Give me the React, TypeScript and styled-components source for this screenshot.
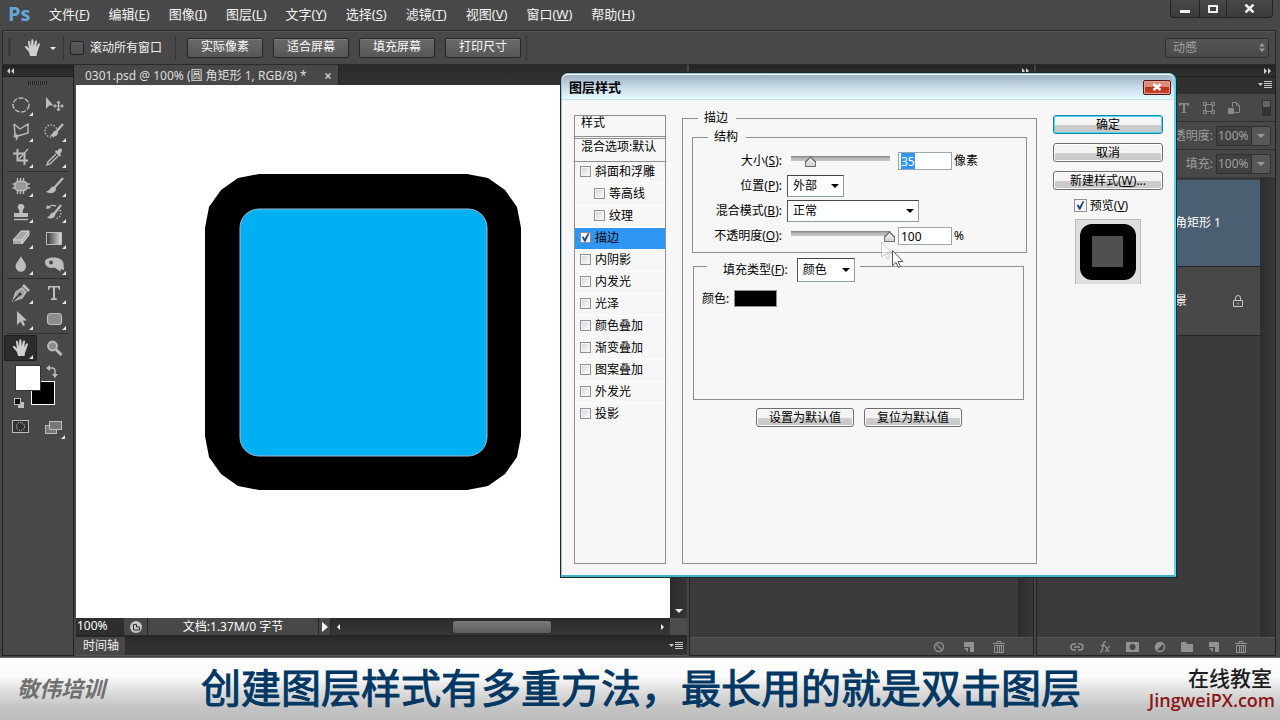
import React, { useEffect, useRef } from 'react';
import styled, { createGlobalStyle, css } from 'styled-components';

const Global = createGlobalStyle`
  * { box-sizing: border-box; }
  body { margin: 0; background: #464646; }
  body, button, input, select, textarea {
    font-family: "Noto Sans", "Noto Sans CJK SC", sans-serif;
    font-size: 12px;
    line-height: 16px;
  }
  button, select, input { margin: 0; }
  button:focus, select:focus, input:focus { outline: none; }
  svg { display: block; flex: none; }
`;

const Shell = styled.div`
  position: relative;
  display: flex;
  flex-direction: column;
  min-height: 100vh;
  overflow: hidden;
  background: #464646;
  color: #f0f0f0;
`;

/* ---------- menu bar ---------- */
const MenuBar = styled.header`
  display: flex;
  align-items: center;
  height: 30px;
  padding: 0 0 2px 8px;
  background: #484848;
`;
const Logo = styled.div`
  width: 41px;
  font-family: "Open Sans", sans-serif;
  font-size: 20px;
  font-weight: 700;
  line-height: 26px;
  color: #66a7dc;
`;
const Menus = styled.nav`
  display: flex;
  flex: 1;
  gap: 19px;
`;
const MenuItem = styled.button`
  padding: 0;
  border: 0;
  background: none;
  color: #f4f4f4;
  font-size: 13px;
  line-height: 18px;
  white-space: nowrap;
`;
const WindowButtons = styled.div`
  display: flex;
  align-self: flex-start;
  height: 18px;
  margin-right: 7px;
  border: 1px solid #222;
  border-top: 0;
  border-radius: 0 0 4px 4px;
  background: linear-gradient(#474747, #3c3c3c);
`;
const WindowButton = styled.button<{ $w: number }>`
  display: flex;
  align-items: center;
  justify-content: center;
  width: ${(p) => p.$w}px;
  padding: 0;
  border: 0;
  background: none;
  & + & { border-left: 1px solid #222; }
`;

/* ---------- options bar ---------- */
const OptionsBar = styled.div`
  display: flex;
  align-items: center;
  height: 35px;
  margin: 0 4px 0 2px;
  padding: 0 6px 0 5px;
  border: 1px solid #2a2a2a;
  box-shadow: inset 0 1px 0 #555;
  background: #484848;
`;
const Divider = styled.span`
  width: 1px;
  height: 24px;
  margin: 0 6px 0 5px;
  background: #333;
`;
const DarkCheck = styled.input`
  appearance: none;
  width: 14px;
  height: 14px;
  border: 1px solid #222;
  border-radius: 2px;
  background: linear-gradient(#5c5c5c, #4e4e4e);
`;
const CheckLabel = styled.label`
  display: flex;
  align-items: center;
  gap: 6px;
  width: 100px;
  white-space: nowrap;
`;
const OptionButtons = styled.div`
  display: flex;
  gap: 10px;
  padding-left: 5px;
`;
const OptionButton = styled.button`
  width: 76px;
  height: 20px;
  padding: 0 0 1px;
  border: 1px solid #262626;
  border-radius: 2px;
  background: linear-gradient(#6a6a6a, #565656);
  box-shadow: inset 0 1px 0 #7c7c7c;
  color: #fafafa;
`;
const WorkspaceBox = styled.div`
  display: grid;
  align-items: center;
  width: 104px;
  height: 20px;
  margin-left: auto;
  > * { grid-area: 1 / 1; }
  > svg { justify-self: end; margin-right: 4px; pointer-events: none; }
`;
const WorkspaceSelect = styled.select`
  appearance: none;
  width: 100%;
  height: 20px;
  padding: 0 7px;
  border: 1px solid #303030;
  border-radius: 3px;
  background: linear-gradient(#545454, #4a4a4a);
  color: #a2a2a2;
`;

/* ---------- work area ---------- */
const WorkArea = styled.main`
  display: flex;
  flex: 1;
  gap: 2px;
  padding: 0 4px 1px 2px;
  border-bottom: 1px solid #6a6a6a;
`;
const Strip = styled.div<{ $end?: boolean }>`
  display: flex;
  align-items: center;
  justify-content: ${(p) => (p.$end ? 'flex-end' : 'flex-start')};
  height: 12px;
  padding: 0 3px 0 4px;
  background: linear-gradient(#232323, #313131);
  border-bottom: 1px solid #1f1f1f;
`;
const ToolPanel = styled.aside`
  display: flex;
  flex-direction: column;
  width: 72px;
  border: 1px solid #222;
  border-top: 0;
  background: #484848;
`;
const Grip = styled.div`
  width: 19px;
  height: 4px;
  margin: 4px auto 7px 25px;
  background: repeating-linear-gradient(90deg, #222 0 1px, #555 1px 2px);
`;
const ToolGroup = styled.div`
  display: grid;
  grid-template-columns: 33px 33px;
  padding-left: 1px;
`;
const ToolButton = styled.button<{ $on?: boolean }>`
  display: flex;
  align-items: center;
  justify-content: center;
  height: 26px;
  padding: 0;
  border: 0;
  border-radius: 2px;
  background: none;
  ${(p) => p.$on && css`
    background: #2c2c2c;
    box-shadow: inset 0 0 0 1px #202020;
  `}
`;
const ToolRule = styled.hr`
  width: 62px;
  height: 1px;
  margin: 1px auto;
  border: 0;
  background: #2e2e2e;
`;

const Document = styled.section`
  display: flex;
  flex: 1;
  flex-direction: column;
  min-width: 0;
  background: #262626;
`;
const TabBar = styled.div`
  display: flex;
  height: 20px;
  background: linear-gradient(#2a2a2a, #313131);
`;
const DocTab = styled.div`
  display: flex;
  align-items: center;
  justify-content: space-between;
  width: 263px;
  padding: 2px 7px 0 9px;
  border-right: 1px solid #222;
  background: #484848;
  color: #dedede;
  white-space: nowrap;
`;
const TabClose = styled.button`
  padding: 0;
  border: 0;
  background: none;
`;
const CanvasRow = styled.div`
  display: flex;
  flex: 1;
`;
const Canvas = styled.div`
  flex: 1;
  min-width: 0;
  padding: 89px 129px;
  background: #fff;
`;
const VScroll = styled.div`
  display: flex;
  align-items: flex-end;
  justify-content: center;
  width: 17px;
  padding-bottom: 5px;
  background: linear-gradient(90deg, #2a2a2a, #363636);
`;
const StatusBar = styled.div`
  display: flex;
  height: 17px;
  background: #333;
`;
const ZoomText = styled.div`
  width: 48px;
  padding-left: 1px;
  background: #2e2e2e;
  color: #fff;
`;
const StatusCell = styled.div<{ $w: number }>`
  display: flex;
  align-items: center;
  justify-content: center;
  width: ${(p) => p.$w}px;
  border-right: 1px solid #262626;
  background: #484848;
  color: #fff;
`;
const HScroll = styled.div`
  display: flex;
  flex: 1;
  align-items: center;
  justify-content: space-between;
  padding: 0 5px;
  background: linear-gradient(#2b2b2b, #363636);
`;
const HThumb = styled.div`
  width: 98px;
  height: 12px;
  margin-right: auto;
  margin-left: 113px;
  border-radius: 3px;
  background: linear-gradient(#787878, #5e5e5e);
`;
const ScrollCorner = styled.div`
  width: 17px;
  background: #4c4c4c;
`;
const Timeline = styled.div`
  display: flex;
  align-items: center;
  justify-content: space-between;
  height: 19px;
  margin-top: 2px;
  padding-right: 4px;
  border-bottom: 1px solid #555;
  background: linear-gradient(#2a2a2a, #343434);
`;
const TimelineTab = styled.div`
  align-self: stretch;
  width: 49px;
  padding-left: 7px;
  line-height: 18px;
  background: #484848;
`;

/* ---------- right panels ---------- */
const SidePanel = styled.aside<{ $w: number }>`
  display: flex;
  flex-direction: column;
  width: ${(p) => p.$w}px;
  border: 1px solid #222;
  border-top: 0;
  background: #3b3b3b;
`;
const PanelBody = styled.div`
  display: flex;
  flex: 1;
  justify-content: flex-end;
`;
const Gutter = styled.div`
  width: 15px;
  background: linear-gradient(90deg, #2d2d2d, #383838);
`;
const PanelFooter = styled.div<{ $gap: number; $end: number }>`
  display: flex;
  align-items: center;
  justify-content: flex-end;
  gap: ${(p) => p.$gap}px;
  height: 18px;
  padding-right: ${(p) => p.$end}px;
  border-top: 1px solid #555;
  background: #484848;
`;
const PanelTabs = styled.div`
  display: flex;
  align-items: center;
  justify-content: flex-end;
  height: 16px;
  padding-right: 3px;
  background: #303030;
`;
const PanelRow = styled.div`
  display: flex;
  align-items: center;
  justify-content: flex-end;
  height: 28px;
  padding-right: 4px;
  border-top: 1px solid #303030;
  background: #484848;
  color: #9c9c9c;
`;
const FilterIcons = styled.div`
  display: flex;
  align-items: center;
  gap: 13px;
`;
const ValueBox = styled.input`
  width: 35px;
  height: 20px;
  margin-left: 3px;
  padding: 0 1px;
  border: 1px solid #303030;
  border-right: 0;
  background: #404040;
  color: #a2a2a2;
`;
const ValueArrow = styled.button`
  display: flex;
  align-items: center;
  justify-content: center;
  width: 20px;
  height: 20px;
  padding: 0;
  border: 1px solid #303030;
  border-radius: 0 2px 2px 0;
  background: #575757;
`;
const LayerList = styled.div`
  flex: 1;
  padding-top: 3px;
`;
const Layer = styled.div<{ $h: number; $active?: boolean }>`
  display: flex;
  align-items: center;
  justify-content: space-between;
  height: ${(p) => p.$h}px;
  padding: 0 16px 0 126px;
  border-bottom: 1px solid #262626;
  background: ${(p) => (p.$active ? '#4b5f72' : '#484848')};
  color: #fff;
`;

/* ---------- dialog ---------- */
const Dialog = styled.section`
  position: absolute;
  top: 73px;
  left: 561px;
  display: flex;
  flex-direction: column;
  width: 615px;
  height: 504px;
  border: 1px solid #9fc3ce;
  border-right: 2px solid #55dcf2;
  border-bottom: 2px solid #3fb4c6;
  border-radius: 7px 7px 0 0;
  box-shadow: 0 0 0 1px #1d2a2e;
  background: #f7f7f7;
  color: #000;
`;
const TitleBar = styled.div`
  display: flex;
  align-items: center;
  justify-content: space-between;
  height: 26px;
  padding: 0 3px 0 7px;
  border-top: 1px solid #fff;
  border-bottom: 1px solid #c6dde6;
  border-radius: 6px 6px 0 0;
  background: linear-gradient(#9fb2c4, #c8dae8 50%, #e6fbff);
`;
const DialogTitle = styled.h1`
  margin: 0;
  font-size: 13px;
  line-height: 20px;
  font-weight: 700;
`;
const CloseButton = styled.button`
  display: flex;
  align-items: center;
  justify-content: center;
  width: 28px;
  height: 15px;
  padding: 0;
  border: 1px solid #4d1a1a;
  border-radius: 2px;
  box-shadow: inset 0 0 0 1px #e8a090;
  background: linear-gradient(#e08a78 45%, #b8301c 50%, #c8492f);
`;
const DialogBody = styled.div`
  display: flex;
  flex: 1;
  align-items: flex-start;
  padding: 10px 11px 11px 12px;
`;
const StyleList = styled.div`
  align-self: stretch;
  width: 92px;
  margin: 5px 0 0;
  border: 1px solid #8f8f8f;
`;
const ListHead = styled.div<{ $double?: boolean }>`
  height: 23px;
  padding: 0 6px;
  border-bottom: ${(p) => (p.$double ? '3px double' : '1px solid')} #8f8f8f;
  line-height: ${(p) => (p.$double ? 14 : 16)}px;
  white-space: nowrap;
`;
const StyleRow = styled.label<{ $indent?: boolean; $on?: boolean }>`
  display: flex;
  align-items: center;
  gap: 4px;
  height: 22px;
  padding: 0 0 2px ${(p) => (p.$indent ? 19 : 5)}px;
  border-bottom: 1px solid #fff;
  background: ${(p) => (p.$on ? '#2f96f3' : 'transparent')};
`;
const Check = styled.input<{ $s: number }>`
  appearance: none;
  display: grid;
  flex: none;
  place-items: center;
  width: ${(p) => p.$s}px;
  height: ${(p) => p.$s}px;
  border: 1px solid #8b9299;
  background: linear-gradient(135deg, #cfd3d8, #fff);
  box-shadow: inset 0 0 0 1px #f6f6f6;
  &:checked { background: #f4f6fb; }
  &:checked::after {
    content: "";
    width: 9px;
    height: 9px;
    background: #26448f;
    clip-path: polygon(10% 45%, 28% 40%, 42% 62%, 78% 4%, 96% 4%, 50% 96%, 36% 96%);
  }
`;
const Group = styled.fieldset`
  min-width: 0;
  margin: 0;
  padding: 0;
  border: 1px solid #8f8f8f;
`;
const MainGroup = styled(Group)`
  flex: 1;
  align-self: stretch;
  margin-left: 16px;
`;
const StructureGroup = styled(Group)`
  height: 124px;
  margin: 3px 9px 5px;
`;
const FillGroup = styled(Group)`
  height: 142px;
  margin: 0 12px 0 10px;
`;
const Legend = styled.legend`
  margin-left: 15px;
  padding: 0 8px 0 6px;
  line-height: 16px;
`;
const FillLegend = styled.legend`
  display: flex;
  align-items: flex-start;
  height: 16px;
  margin-left: 13px;
  padding: 0 5px 0 16px;
  > label { padding-top: 4px; margin-right: 9px; }
`;
const Fields = styled.div`
  display: flex;
  flex-direction: column;
  gap: 3px;
  padding-top: 5px;
`;
const Field = styled.div`
  display: flex;
  align-items: center;
  height: 22px;
`;
const FieldLabel = styled.label<{ $wide?: boolean }>`
  width: ${(p) => (p.$wide ? 94 : 92)}px;
  padding-right: ${(p) => (p.$wide ? 5 : 3)}px;
  text-align: right;
  white-space: nowrap;
`;
const SelectBox = styled.div<{ $w: number; $h: number }>`
  display: grid;
  align-items: center;
  width: ${(p) => p.$w}px;
  height: ${(p) => p.$h}px;
  > * { grid-area: 1 / 1; }
  > svg { justify-self: end; margin-right: 5px; pointer-events: none; }
`;
const Select = styled.select`
  appearance: none;
  width: 100%;
  height: 100%;
  padding: 0 5px;
  border: 1px solid #8ca0a0;
  border-top-color: #444;
  border-left-color: #555;
  background: #fff;
  color: #000;
`;
const Slider = styled.input`
  appearance: none;
  width: 110px;
  height: 14px;
  margin: 0 3px 0 0;
  background: linear-gradient(#7d7d7d, #b4b4b4 40%, #c8c8c8) center 2px / 99px 5px no-repeat;
  &::-webkit-slider-thumb {
    appearance: none;
    width: 11px;
    height: 11px;
    margin-top: 1px;
    background:
      linear-gradient(135deg, #6f6f6f 0 5px, transparent 5px),
      linear-gradient(225deg, #6f6f6f 0 5px, transparent 5px),
      linear-gradient(#f6f6f6, #cfcfcf);
    box-shadow: inset 0 0 0 1px #6f6f6f;
    clip-path: polygon(50% 0, 100% 50%, 100% 100%, 0 100%, 0 50%);
  }
`;
const NumberBox = styled.input`
  width: 54px;
  height: 18px;
  margin-right: 2px;
  padding: 0 2px;
  border: 1px solid #9aa8ae;
  background: #fff;
  color: #000;
  &::selection { background: #2f96f3; color: #fff; }
`;
const ColorRow = styled.div`
  display: flex;
  align-items: center;
  gap: 5px;
  padding: 16px 0 0 8px;
`;
const Swatch = styled.button`
  width: 43px;
  height: 17px;
  padding: 0;
  border: 1px solid #8f8f8f;
  background: #000;
`;
const DefaultButtons = styled.div`
  display: flex;
  gap: 10px;
  padding: 8px 0 0 73px;
`;
const XpButton = styled.button<{ $w: number; $primary?: boolean }>`
  width: ${(p) => p.$w}px;
  height: 19px;
  padding: 0;
  border: 1px solid ${(p) => (p.$primary ? '#1587a6' : '#6e6e6e')};
  border-radius: 3px;
  box-shadow: inset 0 0 0 1px ${(p) => (p.$primary ? '#4fd8f4' : '#fdfdfd')};
  background: linear-gradient(#f4f4f4 50%, #cdcdcd 52%, #c8c8c8);
  color: #000;
  line-height: 16px;
`;
const Actions = styled.div`
  display: flex;
  flex-direction: column;
  align-items: center;
  gap: 9px;
  width: 110px;
  margin: 5px 0 0 16px;
`;
const PreviewLabel = styled.label`
  display: flex;
  align-items: center;
  gap: 3px;
  height: 13px;
  margin-right: 14px;
`;
const Thumb = styled.div`
  display: grid;
  place-items: center;
  width: 66px;
  height: 65px;
  margin-top: -2px;
  border: 1px solid #bbb;
  border-bottom: 0;
  background: #dedede;
`;
const Pointer = styled.svg`
  position: absolute;
  top: 241px;
  left: 880px;
  pointer-events: none;
`;

/* ---------- caption band ---------- */
const Band = styled.footer`
  display: flex;
  align-items: center;
  justify-content: space-between;
  height: 62px;
  padding: 0 5px 0 17px;
  background: linear-gradient(#fff 0, #fafafa 30%, #dcdcdc 55%, #c4c4c4 80%, #bcbcbc);
`;
const School = styled.div`
  width: 120px;
  padding-bottom: 2px;
  font-size: 22px;
  font-style: italic;
  font-weight: 700;
  line-height: 28px;
  color: #707070;
`;
const Caption = styled.p`
  margin: 0;
  padding-bottom: 2px;
  font-size: 40px;
  line-height: 60px;
  color: #003763;
  -webkit-text-stroke: 1px #003763;
  white-space: nowrap;
`;
const Brand = styled.div`
  display: flex;
  flex-direction: column;
  align-items: flex-end;
  width: 130px;
`;
const BrandName = styled.span`
  margin-right: 3px;
  font-family: "Noto Sans CJK SC", sans-serif;
  font-size: 21px;
  font-weight: 500;
  line-height: 23px;
  color: #1c1c1c;
`;
const BrandLink = styled.a`
  color: #8c1414;
  font-family: "Open Sans", sans-serif;
  font-size: 18px;
  font-weight: 600;
  line-height: 23px;
  text-decoration: none;
`;

/* ---------- icons ---------- */
const G = '#bdbdbd';

const Tool = ({ children, plain }: { children: React.ReactNode; plain?: boolean }) => (
  <svg width="26" height="26" viewBox="0 0 26 26" fill="none" stroke={G} strokeWidth="1.4">
    {children}
    {!plain && <path d="M25 20v4h-4z" fill="#e6e6e6" stroke="none" />}
  </svg>
);

const HandShape = () => (
  <path
    d="M10 21 9 17 5 12.500c-.8-1.200.8-2.200 1.800-1.200L9 13.500 8 7.200c-.2-1.600 1.700-1.900 2-.4l1 4.800.3-6.300c.1-1.500 2-1.500 2.100 0l.3 6.200 1.300-5.200c.4-1.500 2.200-1 2 .4l-.8 5.600 1.900-3.500c.8-1.300 2.300-.5 1.800.8L17 18l-.5 3z"
    fill="#cfcfcf"
    stroke="none"
  />
);

const toolGroups: { name: string; icon: React.ReactNode; on?: boolean }[][] = [
  [
    { name: '椭圆选框工具', icon: <Tool><ellipse cx="13" cy="13" rx="8" ry="7" strokeDasharray="5 1.500" /></Tool> },
    {
      name: '移动工具',
      icon: (
        <Tool plain>
          <path d="M5 5v12l3-3.500h4.500z" fill={G} stroke="none" />
          <path d="M17.500 9.500v9M13 14h9M16 11l1.500-1.500L19 11M16 17l1.500 1.500L19 17M14.500 12.500 13 14l1.500 1.500M20.500 12.500 22 14l-1.500 1.500" strokeWidth="1.200" />
        </Tool>
      ),
    },
    { name: '多边形套索工具', icon: <Tool><path d="m6 6 6 5 8-5v9l-10 3-3-1.500 1-1M6 6l1 10M7 17c-1.500 1-1 2 1 2l2-1-2 4" /></Tool> },
    {
      name: '快速选择工具',
      icon: (
        <Tool>
          <circle cx="10" cy="13" r="6" strokeDasharray="1.500 1.500" />
          <path d="m22 6-7 8" strokeWidth="2.200" />
          <path d="M15 12.500c-3 0-3 4-6 5 3 2 8 1 8-3z" fill={G} stroke="none" />
        </Tool>
      ),
    },
    { name: '裁剪工具', icon: <Tool><path d="M9.500 5v11.500H20M5 9.500h11.500V21" strokeWidth="2" /><path d="m11 15 9-10" strokeWidth="1.200" /></Tool> },
    {
      name: '吸管工具',
      icon: (
        <Tool>
          <path d="m15 10-8 8-1 3 3-1 8-8" />
          <path d="m14 8 5 5 1-2-1-1 2-3c.5-2-1-3-3-2l-2 2-1-1z" fill={G} stroke="none" />
        </Tool>
      ),
    },
  ],
  [
    {
      name: '污点修复画笔',
      icon: (
        <Tool>
          <rect x="7" y="8.500" width="12" height="9" rx="3.500" fill="#999" />
          <path d="M9.500 5v3M12.500 5v3M15.500 5v3M9.500 18v3M12.500 18v3M15.500 18v3M4.500 11h3M4.500 15h3M19 11h3M19 15h3" />
        </Tool>
      ),
    },
    {
      name: '画笔工具',
      icon: (
        <Tool>
          <path d="m22 5-8.500 9.500" strokeWidth="2.200" />
          <path d="M13 13.500c-4-.5-3 4-8 5 3 3 10 2 10-3z" fill={G} stroke="none" />
        </Tool>
      ),
    },
    {
      name: '仿制图章工具',
      icon: (
        <Tool>
          <path d="M13 5a3 3 0 0 1 2 5.500L14.500 14H20v4H6v-4h5.500L11 10.500A3 3 0 0 1 13 5z" fill={G} stroke="none" />
          <path d="M6 20.500h14" />
        </Tool>
      ),
    },
    {
      name: '历史记录画笔',
      icon: (
        <Tool>
          <path d="m20 6-7 9" strokeWidth="2.200" />
          <path d="M13 13.500c-4-.5-3 3-7 5 3 2 8 1 8.500-3.500z" fill={G} stroke="none" />
          <path d="M7 9c2-3 5-3 8-2" />
          <path d="m5 10 1-4 4 3z" fill={G} stroke="none" />
          <path d="M19 11c2 4 0 8-5 9" strokeDasharray="1.500 1.500" />
        </Tool>
      ),
    },
    {
      name: '橡皮擦工具',
      icon: (
        <Tool>
          <path d="M13 6h8v4l-7 9H5v-4z" fill="#a8a8a8" stroke="none" />
          <path d="M13 6h8l-7 9H5zM14 15v4l7-9V6" stroke="#dadada" strokeWidth="1" />
        </Tool>
      ),
    },
    {
      name: '渐变工具',
      icon: (
        <Tool>
          <defs>
            <linearGradient id="ramp"><stop stopColor="#333" /><stop offset="1" stopColor="#ddd" /></linearGradient>
          </defs>
          <rect x="5.500" y="7.500" width="15" height="12" fill="url(#ramp)" strokeWidth="1" />
        </Tool>
      ),
    },
    { name: '模糊工具', icon: <Tool><path d="M13 5c1.500 4 5 6.500 5 10.500a5.200 5.200 0 0 1-10.400 0C7.600 11.500 11.500 9 13 5z" fill={G} stroke="none" /></Tool> },
    {
      name: '海绵工具',
      icon: (
        <Tool>
          <path fillRule="evenodd" d="M4 11c0-3.500 5-5 10-4.500 5 .5 8 2.500 8.500 6l.5 6.500-3-1-.500 2.500-6-4c-5 1.500-9.500-1-9.500-5.500zm6-1.500a2 2 0 1 0 .1 4 2 2 0 0 0-.1-4z" fill={G} stroke="none" />
        </Tool>
      ),
    },
  ],
  [
    {
      name: '钢笔工具',
      icon: (
        <Tool>
          <path d="m5 21 3-9 6-4 4 4-4 6z" fill="#a0a0a0" />
          <path d="m5 21 7-7" stroke="#333" />
          <circle cx="12" cy="14" r="1.500" fill="#333" stroke="none" />
          <path d="m14 6 2-2 6 6-2 2z" fill={G} stroke="none" />
        </Tool>
      ),
    },
    { name: '文字工具', icon: <Tool><path d="M7 6h12v4h-1l-1-2.500h-3V18l2 .5V20h-6v-1.500l2-.5V7.500H9L8 10H7z" fill={G} stroke="none" /></Tool> },
    { name: '路径选择工具', icon: <Tool><path d="M9 5v14l3.500-3.500L15 20l2-1-2-4.500h4z" fill={G} stroke="none" /></Tool> },
    { name: '圆角矩形工具', icon: <Tool><rect x="6.500" y="7.500" width="14" height="11" rx="3" fill="#8c8c8c" strokeWidth="1.200" /></Tool> },
  ],
  [
    { name: '抓手工具', on: true, icon: <Tool><HandShape /></Tool> },
    {
      name: '缩放工具',
      icon: (
        <Tool plain>
          <circle cx="11.500" cy="11" r="4.500" fill="#8c8c8c" strokeWidth="1.800" />
          <path d="m15 14.500 5.500 5.500" strokeWidth="3" />
        </Tool>
      ),
    },
  ],
];

const ColorWell = () => (
  <svg width="70" height="80" viewBox="0 0 70 80" role="img" aria-label="前景色与背景色">
    <rect x="28.500" y="20.500" width="23" height="23" fill="#000" stroke="#fff" />
    <rect x="12" y="4" width="26" height="26" fill="#333" />
    <rect x="13" y="5" width="24" height="24" fill="#fff" />
    <path d="M47 7h2q3 0 3 3v3" fill="none" stroke={G} strokeWidth="1.400" />
    <path d="m43 7 4-3v6zM52 17l-3-4h6z" fill={G} />
    <rect x="15" y="41" width="6" height="6" fill={G} />
    <rect x="11.500" y="37.500" width="6" height="6" fill="#111" stroke={G} />
    <rect x="9.500" y="59.500" width="16" height="12" fill="#333" stroke={G} />
    <circle cx="17.500" cy="65.500" r="4" fill="none" stroke="#eee" strokeDasharray="1 1.200" />
    <rect x="42.500" y="64.500" width="11" height="8" fill="#777" stroke={G} />
    <rect x="46.500" y="60.500" width="12" height="8" fill="#777" stroke={G} />
    <path d="M62 74v4h-4z" fill="#e6e6e6" />
  </svg>
);

const DownArrow = ({ fill }: { fill: string }) => (
  <svg width="8" height="4" viewBox="0 0 8 4"><path d="M0 0h8L4 4z" fill={fill} /></svg>
);
const Chevrons = ({ flip }: { flip?: boolean }) => (
  <svg width="8" height="6" viewBox="0 0 8 6">
    <path d={flip ? 'M0 0v6l3-3zM4 0v6l3-3z' : 'M3 0v6L0 3zM7 0v6L4 3z'} fill="#d0d0d0" />
  </svg>
);
const PanelMenuIcon = () => (
  <svg width="14" height="8" viewBox="0 0 14 8">
    <path d="M0 2h5L2.500 5z" fill="#c8c8c8" />
    <path d="M6 .5h8M6 2.500h8M6 4.500h8M6 6.500h8" stroke="#c8c8c8" />
  </svg>
);
const NewIcon = () => (
  <svg width="12" height="12" viewBox="0 0 12 12"><path d="M1 1h10v10H7V6H1z" fill="#929292" /><path d="M1 7h4v4z" fill="#929292" /></svg>
);
const TrashIcon = () => (
  <svg width="12" height="12" viewBox="0 0 12 12" fill="none" stroke="#929292">
    <path d="M0 2.500h12M4 2V.5h4V2M1.500 4.500h9V11.500h-9zM4.500 5v6M6.500 5v6M8.500 5v6" />
  </svg>
);

const menus: [string, string][] = [
  ['文件', 'F'], ['编辑', 'E'], ['图像', 'I'], ['图层', 'L'], ['文字', 'Y'],
  ['选择', 'S'], ['滤镜', 'T'], ['视图', 'V'], ['窗口', 'W'], ['帮助', 'H'],
];
const Key = ({ k }: { k: string }) => <>(<u>{k}</u>)</>;

const styleRows: { name: string; indent?: boolean; on?: boolean }[] = [
  { name: '斜面和浮雕' },
  { name: '等高线', indent: true },
  { name: '纹理', indent: true },
  { name: '描边', on: true },
  { name: '内阴影' },
  { name: '内发光' },
  { name: '光泽' },
  { name: '颜色叠加' },
  { name: '渐变叠加' },
  { name: '图案叠加' },
  { name: '外发光' },
  { name: '投影' },
];

function LayerStyleDialog() {
  const size = useRef<HTMLInputElement>(null);
  useEffect(() => {
    size.current?.focus();
    size.current?.select();
  }, []);

  return (
    <Dialog role="dialog" aria-labelledby="dialog-title">
      <TitleBar>
        <DialogTitle id="dialog-title">图层样式</DialogTitle>
        <CloseButton aria-label="关闭">
          <svg width="10" height="8" viewBox="0 0 10 8"><path d="m1.500 1 7 6M8.500 1l-7 6" stroke="#fff" strokeWidth="2.400" /></svg>
        </CloseButton>
      </TitleBar>
      <DialogBody>
        <StyleList>
          <ListHead $double>样式</ListHead>
          <ListHead>混合选项:默认</ListHead>
          {styleRows.map((r) => (
            <StyleRow key={r.name} $indent={r.indent} $on={r.on}>
              <Check type="checkbox" $s={11} defaultChecked={r.on} />
              {r.name}
            </StyleRow>
          ))}
        </StyleList>

        <MainGroup>
          <Legend>描边</Legend>
          <StructureGroup>
            <Legend>结构</Legend>
            <Fields>
              <Field>
                <FieldLabel htmlFor="size">大小<Key k="S" />:</FieldLabel>
                <Slider type="range" aria-label="大小" min={0} max={173} defaultValue={35} />
                <NumberBox id="size" ref={size} defaultValue="35" />
                像素
              </Field>
              <Field>
                <FieldLabel htmlFor="position" $wide>位置<Key k="P" />:</FieldLabel>
                <SelectBox $w={57} $h={22}>
                  <Select id="position"><option>外部</option></Select>
                  <DownArrow fill="#000" />
                </SelectBox>
              </Field>
              <Field>
                <FieldLabel htmlFor="blend" $wide>混合模式<Key k="B" />:</FieldLabel>
                <SelectBox $w={132} $h={22}>
                  <Select id="blend"><option>正常</option></Select>
                  <DownArrow fill="#000" />
                </SelectBox>
              </Field>
              <Field>
                <FieldLabel htmlFor="opacity">不透明度<Key k="O" />:</FieldLabel>
                <Slider type="range" aria-label="不透明度" min={0} max={100} defaultValue={100} />
                <NumberBox id="opacity" defaultValue="100" />
                %
              </Field>
            </Fields>
          </StructureGroup>
          <FillGroup>
            <FillLegend>
              <label htmlFor="fill-type">填充类型<Key k="F" />:</label>
              <SelectBox $w={58} $h={24}>
                <Select id="fill-type"><option>颜色</option></Select>
                <DownArrow fill="#000" />
              </SelectBox>
            </FillLegend>
            <ColorRow>
              <label htmlFor="stroke-color">颜色:</label>
              <Swatch id="stroke-color" />
            </ColorRow>
          </FillGroup>
          <DefaultButtons>
            <XpButton $w={98}>设置为默认值</XpButton>
            <XpButton $w={98}>复位为默认值</XpButton>
          </DefaultButtons>
        </MainGroup>

        <Actions>
          <XpButton $w={110} $primary>确定</XpButton>
          <XpButton $w={110}>取消</XpButton>
          <XpButton $w={110}>新建样式<Key k="W" />...</XpButton>
          <PreviewLabel>
            <Check type="checkbox" $s={13} defaultChecked />
            <span>预览<Key k="V" /></span>
          </PreviewLabel>
          <Thumb>
            <svg width="56" height="56" viewBox="0 0 56 56">
              <rect width="56" height="56" rx="12" fill="#000" />
              <rect x="12" y="12" width="31" height="31" fill="#4f4f4f" />
            </svg>
          </Thumb>
        </Actions>
      </DialogBody>
    </Dialog>
  );
}

export default function App() {
  return (
    <Shell lang="zh-CN">
      <Global />
      <MenuBar>
        <Logo>Ps</Logo>
        <Menus>
          {menus.map(([name, k]) => (
            <MenuItem key={k}>{name}<Key k={k} /></MenuItem>
          ))}
        </Menus>
        <WindowButtons>
          <WindowButton $w={28} aria-label="最小化">
            <svg width="10" height="10" viewBox="0 0 10 10"><path d="M0 6h10v3H0z" fill="#f0f0f0" /></svg>
          </WindowButton>
          <WindowButton $w={27} aria-label="最大化">
            <svg width="10" height="8" viewBox="0 0 10 8"><rect x="1" y="1" width="8" height="6" fill="none" stroke="#f0f0f0" strokeWidth="2" /></svg>
          </WindowButton>
          <WindowButton $w={46} aria-label="关闭">
            <svg width="11" height="9" viewBox="0 0 11 9"><path d="m1.500.5 8 8M9.500.5l-8 8" stroke="#f0f0f0" strokeWidth="2.500" /></svg>
          </WindowButton>
        </WindowButtons>
      </MenuBar>

      <OptionsBar>
        <svg width="50" height="26" viewBox="0 0 50 26">
          <path d="M0 4h3M0 6h3M0 8h3M0 10h3M0 12h3M0 14h3M0 16h3M0 18h3M0 20h3" stroke="#2c2c2c" />
          <g transform="translate(12 0)"><HandShape /></g>
          <path d="M42 12h6l-3 3z" fill="#eee" />
        </svg>
        <Divider />
        <CheckLabel>
          <DarkCheck type="checkbox" />
          滚动所有窗口
        </CheckLabel>
        <Divider />
        <OptionButtons>
          <OptionButton>实际像素</OptionButton>
          <OptionButton>适合屏幕</OptionButton>
          <OptionButton>填充屏幕</OptionButton>
          <OptionButton>打印尺寸</OptionButton>
        </OptionButtons>
        <Divider />
        <WorkspaceBox>
          <WorkspaceSelect aria-label="工作区"><option>动感</option></WorkspaceSelect>
          <svg width="6" height="9" viewBox="0 0 6 9"><path d="M0 3.500h6L3 0zM0 5.500h6L3 9z" fill="#9a9a9a" /></svg>
        </WorkspaceBox>
      </OptionsBar>

      <WorkArea>
        <ToolPanel>
          <Strip><Chevrons /></Strip>
          <Grip />
          {toolGroups.map((group, i) => (
            <React.Fragment key={i}>
              {i > 0 && <ToolRule />}
              <ToolGroup>
                {group.map((t) => (
                  <ToolButton key={t.name} $on={t.on} aria-label={t.name}>{t.icon}</ToolButton>
                ))}
              </ToolGroup>
            </React.Fragment>
          ))}
          <ColorWell />
        </ToolPanel>

        <Document>
          <TabBar>
            <DocTab>
              0301.psd @ 100% (圆 角矩形 1, RGB/8) *
              <TabClose aria-label="关闭文档">
                <svg width="6" height="6" viewBox="0 0 6 6"><path d="m.5.5 5 5M5.500.5l-5 5" stroke="#ccc" strokeWidth="1.500" /></svg>
              </TabClose>
            </DocTab>
          </TabBar>
          <CanvasRow>
            <Canvas>
              <svg width="316" height="316" viewBox="0 0 316 316">
                <path d="M54 0H262L283 4 300 16 312 33 316 54V262L312 283 300 300 283 312 262 316H54L33 312 16 300 4 283 0 262V54L4 33 16 16 33 4z" fill="#000" />
                <rect x="35" y="35" width="247" height="247" rx="19" fill="#00b0f3" stroke="#9bd" strokeWidth="1" />
              </svg>
            </Canvas>
            <VScroll><DownArrow fill="#eee" /></VScroll>
          </CanvasRow>
          <StatusBar>
            <ZoomText>100%</ZoomText>
            <StatusCell $w={24}>
              <svg width="12" height="12" viewBox="0 0 12 12">
                <circle cx="6" cy="6" r="6" fill="#c4c4c4" />
                <path d="M3.500 9V3.500h3V6h3v3z" fill="none" stroke="#333" />
              </svg>
            </StatusCell>
            <StatusCell $w={171}>文档:1.37M/0 字节</StatusCell>
            <StatusCell $w={12}>
              <svg width="6" height="10" viewBox="0 0 6 10"><path d="M0 0v10l6-5z" fill="#fff" /></svg>
            </StatusCell>
            <HScroll>
              <svg width="4" height="6" viewBox="0 0 4 6"><path d="M4 0v6L1 3z" fill="#eee" /></svg>
              <HThumb />
              <svg width="4" height="6" viewBox="0 0 4 6"><path d="M0 0v6l3-3z" fill="#eee" /></svg>
            </HScroll>
            <ScrollCorner />
          </StatusBar>
          <Timeline>
            <TimelineTab>时间轴</TimelineTab>
            <PanelMenuIcon />
          </Timeline>
        </Document>

        <SidePanel $w={345}>
          <Strip $end><Chevrons flip /></Strip>
          <PanelBody><Gutter /></PanelBody>
          <PanelFooter $gap={18} $end={28}>
            <svg width="12" height="12" viewBox="0 0 12 12" fill="none" stroke="#8a8a8a" strokeWidth="1.500">
              <circle cx="6" cy="6" r="4.500" /><path d="m3 3 6 6" />
            </svg>
            <NewIcon />
            <TrashIcon />
          </PanelFooter>
        </SidePanel>

        <SidePanel $w={240}>
          <Strip $end><Chevrons flip /></Strip>
          <PanelTabs><PanelMenuIcon /></PanelTabs>
          <PanelRow>
            <FilterIcons>
              <svg width="12" height="12" viewBox="0 0 12 12"><path d="M1 1h10v3h-1L9 2.500H7V10l1.500.5v.5h-5v-.5L5 10V2.500H3L2 4H1z" fill="#8a8a8a" /></svg>
              <svg width="12" height="12" viewBox="0 0 12 12" fill="none" stroke="#8a8a8a">
                <path d="M2.500 2.500h7v7h-7zM.5.5h3v3h-3zM8.500.5h3v3h-3zM.5 8.500h3v3h-3zM8.500 8.500h3v3h-3z" />
              </svg>
              <svg width="12" height="12" viewBox="0 0 12 12" fill="none" stroke="#8a8a8a">
                <path d="M4.500 5V.5h4l3 3v7H6.500M8.500.5v3h3" /><path d="M.5 6.500h5v5h-5z" fill="#8a8a8a" />
              </svg>
              <svg width="18" height="16" viewBox="0 0 18 16">
                <rect x="9" width="9" height="16" fill="#333" /><rect x="10" y="1" width="7" height="6" fill="#666" />
              </svg>
            </FilterIcons>
          </PanelRow>
          <PanelRow>
            <label htmlFor="layer-opacity">不透明度:</label>
            <ValueBox id="layer-opacity" defaultValue="100%" />
            <ValueArrow aria-label="不透明度选项"><DownArrow fill="#999" /></ValueArrow>
          </PanelRow>
          <PanelRow>
            <label htmlFor="layer-fill">填充:</label>
            <ValueBox id="layer-fill" defaultValue="100%" />
            <ValueArrow aria-label="填充选项"><DownArrow fill="#999" /></ValueArrow>
          </PanelRow>
          <PanelBody>
            <LayerList>
              <Layer $h={87} $active>圆角矩形 1</Layer>
              <Layer $h={69}>
                背景
                <svg width="12" height="12" viewBox="0 0 12 12" fill="none" stroke="#c4c4c4">
                  <path d="M1.500 5.500h9v6h-9zM3.500 5V3a2.500 2.500 0 0 1 5 0v2M6 7.500v2" />
                </svg>
              </Layer>
            </LayerList>
            <Gutter />
          </PanelBody>
          <PanelFooter $gap={15} $end={28}>
            <svg width="14" height="12" viewBox="0 0 14 12" fill="none" stroke="#929292" strokeWidth="1.500">
              <path d="M6 3H4a3 3 0 0 0 0 6h2M8 3h2a3 3 0 0 1 0 6H8M4 6h6" />
            </svg>
            <svg width="12" height="12" viewBox="0 0 12 12" fill="none" stroke="#929292" strokeWidth="1.300">
              <path d="M7 .8C5 .2 4.500 2 4 5s-1 7-3 6M2 4.500h4M6 5.500c2-.5 1.500 5 4.500 5M11 5.500c-2-.5-3 5-5 5" />
            </svg>
            <svg width="13" height="12" viewBox="0 0 13 12"><path fillRule="evenodd" d="M0 1h13v10H0zm6.500 2a3 3 0 1 0 .1 6 3 3 0 0 0-.1-6z" fill="#929292" /></svg>
            <svg width="12" height="12" viewBox="0 0 12 12"><circle cx="6" cy="6" r="4.500" fill="none" stroke="#929292" strokeWidth="1.500" /><path d="M9.500 2.500A5 5 0 0 0 2.500 9.500z" fill="#929292" /></svg>
            <svg width="12" height="12" viewBox="0 0 12 12"><path d="M0 1h5l1 2h6v8H0z" fill="#929292" /></svg>
            <NewIcon />
            <TrashIcon />
          </PanelFooter>
        </SidePanel>
      </WorkArea>

      <Band>
        <School>敬伟培训</School>
        <Caption>创建图层样式有多重方法，最长用的就是双击图层</Caption>
        <Brand>
          <BrandName>在线教室</BrandName>
          <BrandLink href="#home">JingweiPX.com</BrandLink>
        </Brand>
      </Band>

      <LayerStyleDialog />
      <Pointer width="24" height="30" viewBox="0 0 24 30" fill="#fff">
        <path d="M1.500 1v15l3.500-3 2.500 5 2-1L7 12h5z" stroke="#aaa" opacity=".6" />
        <path d="M12.500 9.500v15l3.500-3 2.500 5 2-1-2.500-5h5z" stroke="#555" />
      </Pointer>
    </Shell>
  );
}
